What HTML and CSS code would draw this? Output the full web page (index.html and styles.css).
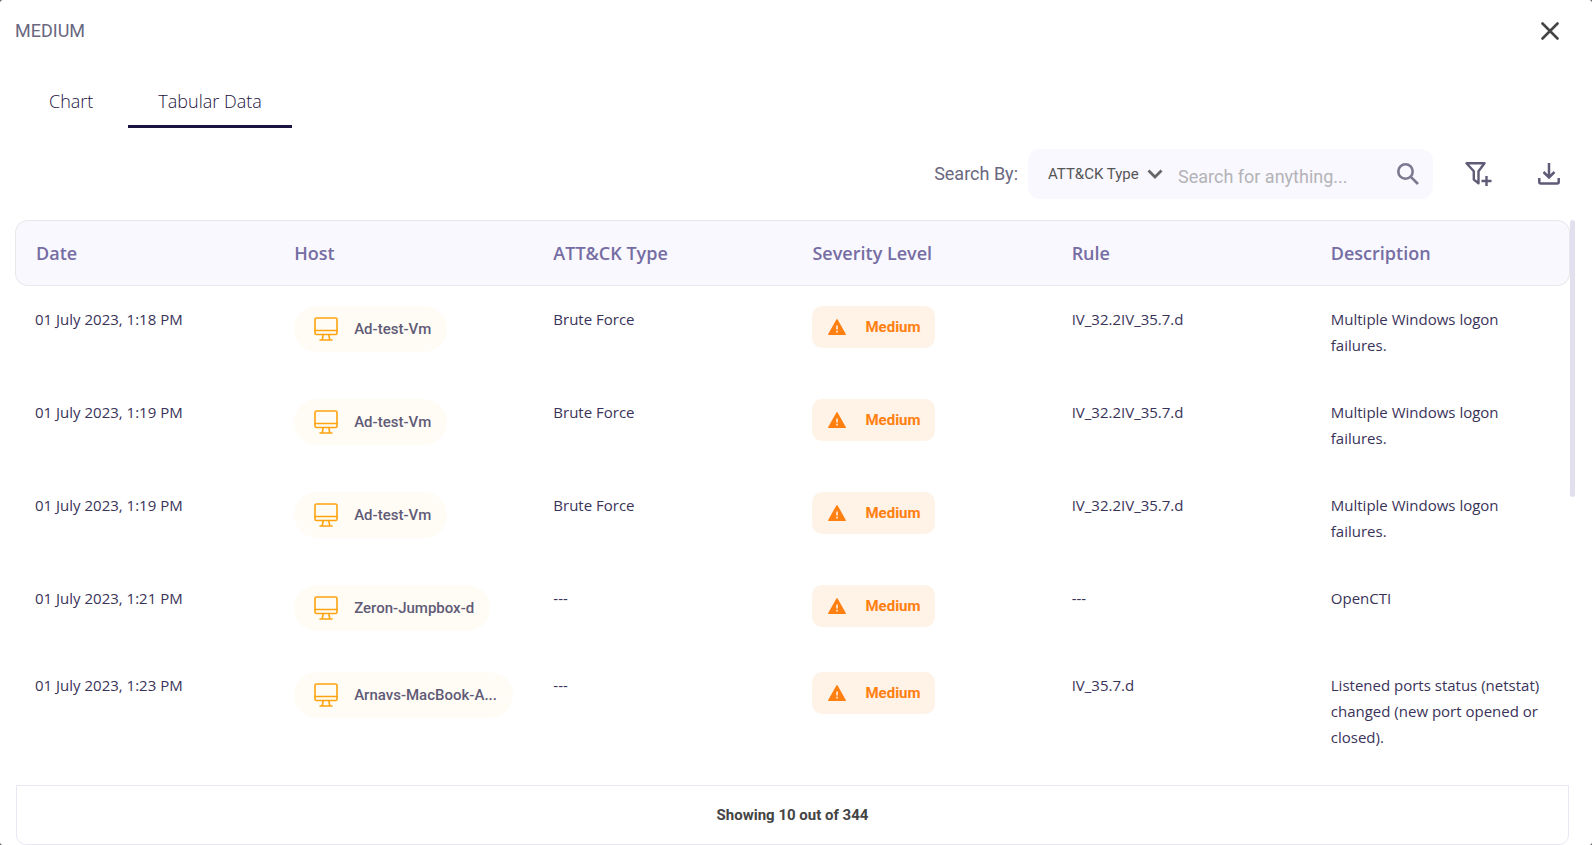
FILE: index.html
```html
<!DOCTYPE html>
<html lang="en">
<head>
<meta charset="utf-8">
<title>Medium</title>
<link rel="stylesheet" href="styles.css">
</head>
<body>
<svg class="sprite" aria-hidden="true">
  <symbol id="monitor" viewBox="0 0 24 24"><g fill="none" stroke="#ffa30f" stroke-width="1.6" stroke-linejoin="round" stroke-linecap="round"><rect x="1" y="1" width="22" height="16.500" rx="1.5"/><path d="M1 13.500h22M9.200 17.500l-.9 5M14.800 17.500l.9 5M6 23h12"/></g></symbol>
  <symbol id="warning" viewBox="0 0 18 16"><path fill="#ff7f11" d="M9 0a.7.7 0 0 1 .6.4l8.200 14.500a.7.7 0 0 1-.6 1.100H.8a.7.7 0 0 1-.6-1.100L8.400.4A.7.7 0 0 1 9 0z"/><path fill="#fff2e7" d="M8.200 6.500h1.600v4H8.200zM8.200 11.800h1.600v1.600H8.200z"/></symbol>
</svg>
<main class="modal">
  <header class="modal-head">
    <h1 class="title">MEDIUM</h1>
    <button class="icon-btn" aria-label="Close"><svg width="18" height="18" viewBox="0 0 18 18"><path d="M1.500 1.500l15 15M16.500 1.500l-15 15" stroke="#444" stroke-width="2.600" stroke-linecap="round"/></svg></button>
  </header>
  <nav class="tabs" role="tablist">
    <button class="tab" role="tab">Chart</button>
    <button class="tab active" role="tab" aria-selected="true">Tabular Data</button>
  </nav>
  <section class="toolbar">
    <label class="by" for="field">Search By:</label>
    <div class="search">
      <div class="select-wrap">
        <select id="field" class="select"><option>ATT&amp;CK Type</option></select>
        <svg class="chevron" width="16" height="10" viewBox="0 0 16 10"><path d="M1.500 1.500L8 8l6.500-6.500" fill="none" stroke="#666" stroke-width="2.800"/></svg>
      </div>
      <input class="query" type="text" placeholder="Search for anything..." aria-label="Search">
      <button class="icon-btn" aria-label="Search"><svg width="22" height="22" viewBox="0 0 22 22" fill="none" stroke="#7b7890" stroke-width="2.600"><circle cx="8.500" cy="8.500" r="7.200"/><path d="M13.800 13.800l7.200 7.200"/></svg></button>
    </div>
    <button class="icon-btn filter" aria-label="Add filter"><svg width="27" height="24" viewBox="0 0 27 24" fill="none" stroke="#5f5b77" stroke-width="2.400"><path d="M1.500 1.300h18l-6 8v12l-4.700-3.700V9.300z" stroke-linejoin="round"/><path d="M21.500 14v10M16.500 19h10"/></svg></button>
    <button class="icon-btn" aria-label="Download"><svg width="22" height="22" viewBox="0 0 22 22" fill="none" stroke="#5f5b77" stroke-width="2.500"><path d="M11 0v14M5.500 9l5.500 5.500L16.500 9M1.300 15v4a1.500 1.500 0 0 0 1.500 1.500h16.400a1.500 1.500 0 0 0 1.500-1.500v-4"/></svg></button>
  </section>
  <section class="scroller">
    <table class="grid">
      <thead><tr><th>Date</th><th>Host</th><th>ATT&amp;CK Type</th><th>Severity Level</th><th>Rule</th><th>Description</th></tr></thead>
      <tbody>
        <tr><td>01 July 2023, 1:18 PM</td><td><span class="host"><svg class="mon"><use href="#monitor"/></svg>Ad-test-Vm</span></td><td>Brute Force</td><td><span class="sev"><svg class="warn"><use href="#warning"/></svg>Medium</span></td><td>IV_32.2IV_35.7.d</td><td>Multiple Windows logon failures.</td></tr>
        <tr><td>01 July 2023, 1:19 PM</td><td><span class="host"><svg class="mon"><use href="#monitor"/></svg>Ad-test-Vm</span></td><td>Brute Force</td><td><span class="sev"><svg class="warn"><use href="#warning"/></svg>Medium</span></td><td>IV_32.2IV_35.7.d</td><td>Multiple Windows logon failures.</td></tr>
        <tr><td>01 July 2023, 1:19 PM</td><td><span class="host"><svg class="mon"><use href="#monitor"/></svg>Ad-test-Vm</span></td><td>Brute Force</td><td><span class="sev"><svg class="warn"><use href="#warning"/></svg>Medium</span></td><td>IV_32.2IV_35.7.d</td><td>Multiple Windows logon failures.</td></tr>
        <tr><td>01 July 2023, 1:21 PM</td><td><span class="host"><svg class="mon"><use href="#monitor"/></svg>Zeron-Jumpbox-d</span></td><td>---</td><td><span class="sev"><svg class="warn"><use href="#warning"/></svg>Medium</span></td><td>---</td><td>OpenCTI</td></tr>
        <tr><td>01 July 2023, 1:23 PM</td><td><span class="host"><svg class="mon"><use href="#monitor"/></svg>Arnavs-MacBook-A...</span></td><td>---</td><td><span class="sev"><svg class="warn"><use href="#warning"/></svg>Medium</span></td><td>IV_35.7.d</td><td>Listened ports status (netstat) changed (new port opened or closed).</td></tr>
      </tbody>
    </table>
    <div class="track"><div class="thumb"></div></div>
  </section>
  <footer class="summary">Showing 10 out of 344</footer>
</main>
</body>
</html>
```
FILE: styles.css
```css
* { box-sizing: border-box; }
body { margin: 0; background: #555; font-family: Roboto, sans-serif; }
button { border: 0; padding: 0; background: none; font: inherit; cursor: pointer; }
svg { display: block; flex: none; }
.sprite { position: absolute; width: 0; height: 0; }
.modal { min-height: 100vh; display: flex; flex-direction: column; background: #fff; border-radius: 3px; }
.modal-head { display: flex; align-items: center; justify-content: space-between; height: 62px; padding: 0 33px 0 15px; }
.title { margin: 0; font-size: 18px; font-weight: 400; line-height: 20px; color: #6a6780; }
.icon-btn { display: flex; align-items: center; }
.tabs { display: flex; gap: 5px; padding: 14px 19px 0; }
.tab { height: 52px; padding: 0 30px; border-bottom: 3px solid transparent; font: 320 18px "Open Sans", sans-serif; color: #1b1340; }
.tab.active { border-color: #1b1340; }
.toolbar { display: flex; align-items: center; justify-content: flex-end; padding: 21px 32px 21px 15px; }
.by { margin-right: 10px; font-size: 18px; line-height: 20px; color: #6a6780; }
.search { display: flex; align-items: center; width: 405px; height: 50px; margin-right: 32px; padding: 0 14px 0 20px; border-radius: 12px; background: #f9f8fe; }
.select-wrap { display: flex; align-items: center; }
.select { appearance: none; width: 115px; margin-right: -16px; padding: 0; border: 0; background: none; font: 15px Roboto, sans-serif; color: #555; }
.chevron { pointer-events: none; }
.query { flex: 1; min-width: 0; padding: 4px 0 0; margin-left: 15px; border: 0; background: none; font: 18px Roboto, sans-serif; color: #444; outline: 0; }
.query::placeholder { color: #b3b3b8; }
.filter { margin-right: 46px; }
.scroller { flex: 1; display: flex; padding: 0 17px 0 15px; }
.grid { flex: 1; width: 100%; table-layout: fixed; border-collapse: separate; border-spacing: 0; align-self: flex-start; font-family: "Open Sans", sans-serif; color: #3a3359; }
.grid th { height: 66px; padding: 0 20px; border: solid #e8e8ec; border-width: 1px 0; background: #f9f8fe; text-align: left; font-size: 18px; font-weight: 550; color: #756da3; }
.grid th:first-child { border-left-width: 1px; border-radius: 13px 0 0 13px; }
.grid th:last-child { border-right-width: 1px; border-radius: 0 13px 13px 0; }
.grid td { padding: 20px 20px 21px; vertical-align: top; font-size: 15px; line-height: 26px; }
.host, .sev { display: flex; align-items: center; width: fit-content; font-family: Roboto, sans-serif; font-size: 15px; white-space: nowrap; }
.host { gap: 16px; height: 46px; padding: 0 16px 0 20px; border-radius: 23px; background: #fffcf5; font-weight: 500; color: #5f5b77; }
.sev { gap: 19px; height: 42px; padding: 0 14px 0 16px; border-radius: 10px; background: #fff2e7; font-weight: 700; color: #ff7f11; }
.mon { width: 24px; height: 24px; }
.warn { width: 18px; height: 16px; }
.track { flex: none; width: 5px; }
.thumb { height: 49%; border-radius: 3px; background: #e2e0ef; }
.summary { display: flex; align-items: center; justify-content: center; height: 60px; margin: 0 23px 0 16px; border: 1px solid #e8e7f3; border-radius: 0 0 10px 10px; font-size: 15px; font-weight: 700; color: #444; }
```
